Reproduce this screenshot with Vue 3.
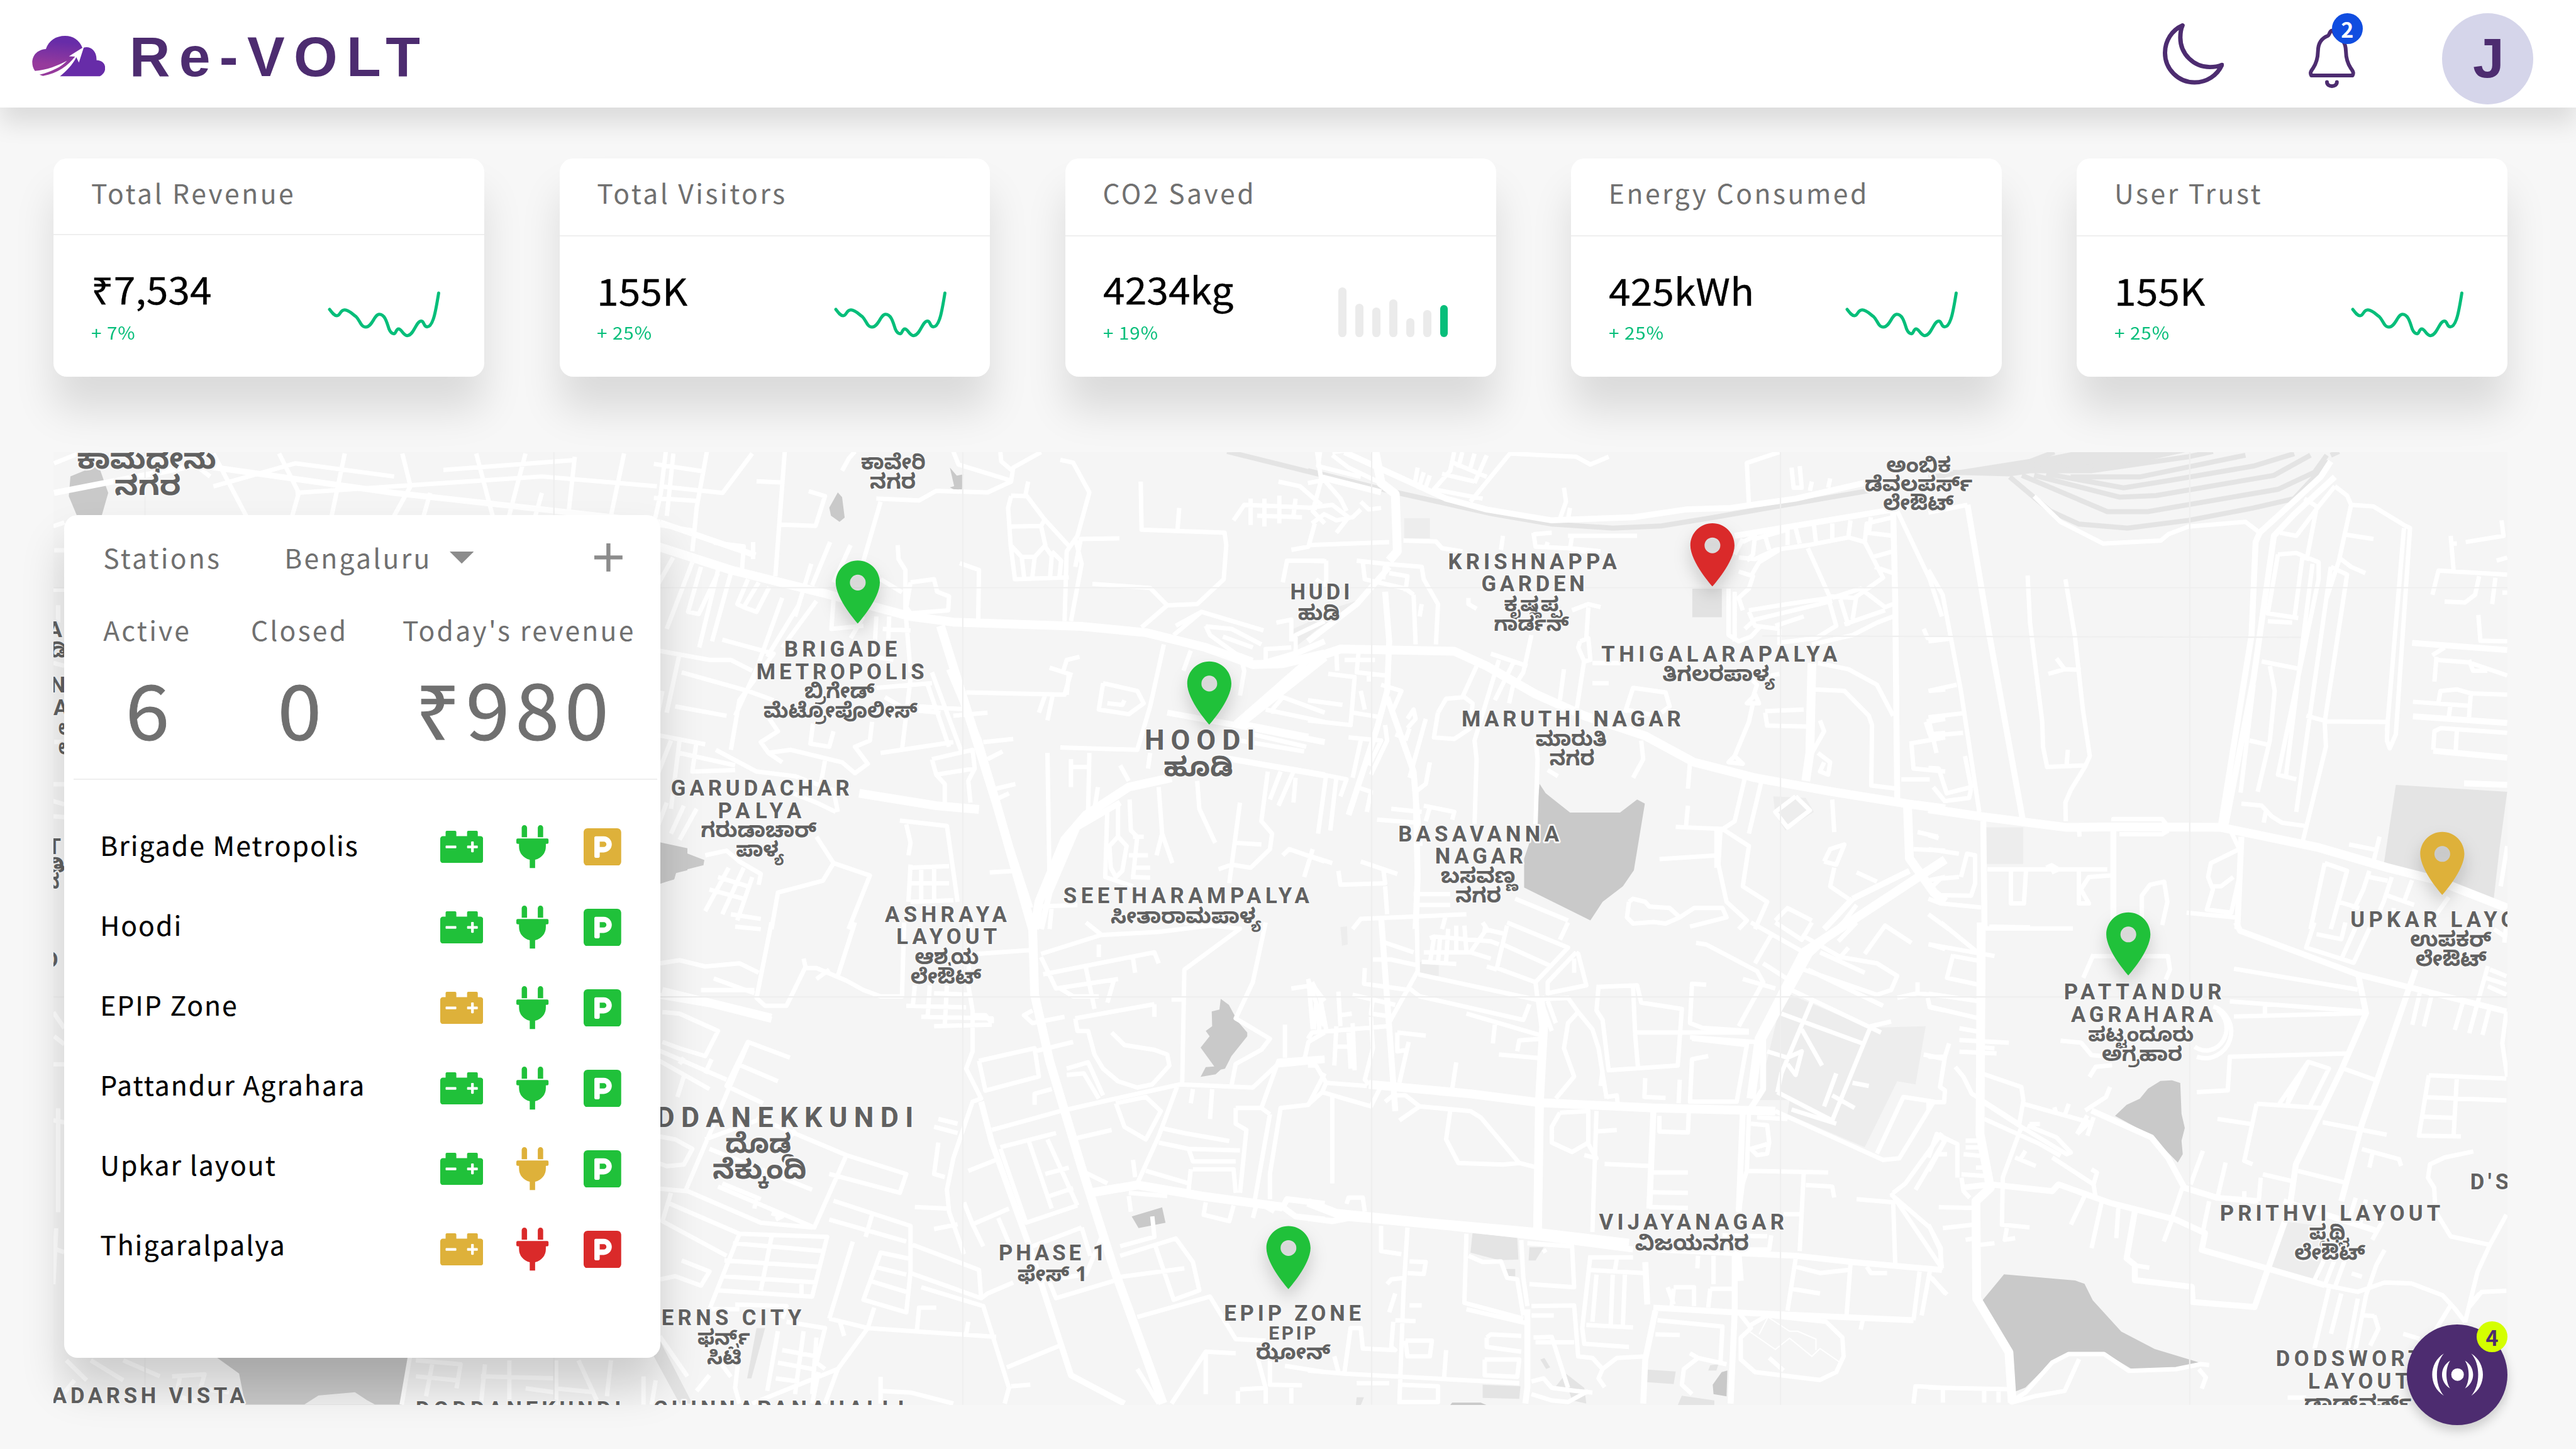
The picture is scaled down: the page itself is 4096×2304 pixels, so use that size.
<script setup>
const cards = [
  { title: 'Total Revenue', value: '₹7,534', delta: '+ 7%', kind: 'line', lead: true },
  { title: 'Total Visitors', value: '155K', delta: '+ 25%', kind: 'line', low: true },
  { title: 'CO2 Saved', value: '4234kg', delta: '+ 19%', kind: 'bars' },
  { title: 'Energy Consumed', value: '425kWh', delta: '+ 25%', kind: 'line', low: true },
  { title: 'User Trust', value: '155K', delta: '+ 25%', kind: 'line', low: true },
]
const bars = [37, 25, 22, 28, 14, 20, 24]

const stations = [
  { name: 'Brigade Metropolis', battery: 'ok', plug: 'ok', park: 'warn' },
  { name: 'Hoodi', battery: 'ok', plug: 'ok', park: 'ok' },
  { name: 'EPIP Zone', battery: 'warn', plug: 'ok', park: 'ok' },
  { name: 'Pattandur Agrahara', battery: 'ok', plug: 'ok', park: 'ok' },
  { name: 'Upkar layout', battery: 'ok', plug: 'warn', park: 'ok' },
  { name: 'Thigaralpalya', battery: 'warn', plug: 'down', park: 'down' },
]

const pins = [
  { x: 2558, y: 1859, s: 'ok' },
  { x: 3606, y: 2160, s: 'ok' },
  { x: 5106, y: 1748, s: 'down' },
  { x: 7282, y: 2668, s: 'warn' },
  { x: 6346, y: 2908, s: 'ok' },
  { x: 3842, y: 3843, s: 'ok' },
]

// [text, left, right, baseline, font size]
const labels = [
  ['BRIGADE', 2339, 2675, 1958, 65], ['METROPOLIS', 2256, 2756, 2025, 65],
  ['HOODI', 3413, 3742, 2235, 84], ['GARUDACHAR', 2001, 2533, 2372, 65], ['PALYA', 2141, 2390, 2439, 65],
  ['SEETHARAMPALYA', 3171, 3904, 2693, 65], ['ASHRAYA', 2639, 3002, 2749, 65], ['LAYOUT', 2673, 2973, 2814, 65],
  ['HUDI', 3847, 4025, 1787, 65], ['KRISHNAPPA', 4318, 4821, 1696, 65], ['GARDEN', 4417, 4725, 1762, 65],
  ['THIGALARAPALYA', 4775, 5478, 1972, 65], ['MARUTHI NAGAR', 4358, 5012, 2166, 65],
  ['BASAVANNA', 4169, 4649, 2508, 65], ['NAGAR', 4279, 4542, 2575, 65],
  ['UPKAR LAYOUT', 7008, 7608, 2763, 65], ['PATTANDUR', 6154, 6624, 2980, 65], ['AGRAHARA', 6175, 6599, 3046, 65],
  ["D'S", 7365, 7480, 3546, 65], ['PRITHVI LAYOUT', 6619, 7276, 3639, 65],
  ['DODSWORTH', 6786, 7278, 4072, 65], ['LAYOUT', 6882, 7182, 4140, 65],
  ['VIJAYANAGAR', 4768, 5320, 3666, 65], ['DODDANEKKUNDI', 1806, 2724, 3359, 84],
  ['PHASE 1', 2978, 3296, 3758, 65], ['EPIP ZONE', 3650, 4058, 3938, 65], ['EPIP', 3783, 3924, 3994, 56],
  ['FERNS CITY', 1925, 2390, 3950, 65], ['CHINNAPANAHALLI', 1949, 2696, 4222, 65],
  ['DODDANEKUNDI', 1240, 1852, 4224, 65], ['ADARSH VISTA', 156, 729, 4183, 65],
  ['A', 142, 184, 1899, 65], ['N', 150, 196, 2065, 65], ['A', 160, 202, 2131, 65],
  ['T', 142, 180, 2547, 65], ['D', 132, 177, 2883, 65],
]
const local = [
  ['ಬ್ರಿಗೇಡ್', 2399, 2608, 2082, 62], ['ಮೆಟ್ರೋಪೊಲೀಸ್', 2277, 2736, 2139, 62],
  ['ಹೂಡಿ', 3470, 3677, 2314, 80], ['ಗರುಡಾಚಾರ್', 2090, 2435, 2496, 62], ['ಪಾಳ್ಯ', 2195, 2338, 2554, 62],
  ['ಸೀತಾರಾಮಪಾಳ್ಯ', 3312, 3761, 2753, 62], ['ಆಶ್ರಯ', 2728, 2919, 2874, 62], ['ಲೇಔಟ್', 2715, 2926, 2932, 62],
  ['ಕಾವೇರಿ', 2567, 2760, 1399, 62], ['ನಗರ', 2594, 2731, 1456, 62], ['ಹುಡಿ', 3870, 3995, 1849, 62],
  ['ಕೃಷ್ಣಪ್ಪ', 4484, 4657, 1822, 60], ['ಗಾರ್ಡನ್', 4454, 4678, 1880, 60], ['ತಿಗಲರಪಾಳ್ಯ', 4957, 5293, 2030, 62],
  ['ಮಾರುತಿ', 4579, 4791, 2224, 62], ['ನಗರ', 4620, 4755, 2282, 62], ['ಬಸವಣ್ಣ', 4296, 4524, 2633, 62],
  ['ನಗರ', 4340, 4476, 2691, 62], ['ಅಂಬಿಕ', 5624, 5817, 1408, 62], ['ಡೆವಲಪರ್ಸ್', 5560, 5881, 1465, 62],
  ['ಲೇಔಟ್', 5615, 5825, 1521, 62], ['ಉಪಕರ್', 7186, 7428, 2822, 62], ['ಲೇಔಟ್', 7202, 7414, 2880, 62],
  ['ಪಟ್ಟಂದೂರು', 6226, 6541, 3105, 60], ['ಅಗ್ರಹಾರ', 6267, 6507, 3163, 60], ['ಪೃಥ್ವಿ', 6885, 7005, 3696, 62],
  ['ಲೇಔಟ್', 6841, 7052, 3756, 62], ['ಡಾಡ್ಸ್‌ವರ್ತ್', 6870, 7190, 4203, 62], ['ವಿಜಯನಗರ', 4875, 5215, 3727, 62],
  ['ದೊಡ್ಡ', 2163, 2365, 3437, 80], ['ನೆಕ್ಕುಂದಿ', 2125, 2405, 3514, 80], ['ಫೇಸ್ 1', 3034, 3242, 3819, 62],
  ['ಝೋನ್', 3745, 3967, 4052, 62], ['ಫರ್ನ್ಸ್', 2080, 2237, 4008, 62], ['ಸಿಟಿ', 2108, 2211, 4067, 62],
  ['ಕಾಮಧೇನು', 230, 645, 1396, 84], ['ನಗರ', 342, 540, 1476, 82],
  ['ಡಿ', 150, 200, 1959, 62], ['ಲೇ', 175, 230, 2190, 62], ['ಲೇ', 175, 230, 2248, 62], ['ತಿ', 145, 195, 2600, 62], ['ನ', 140, 178, 2650, 62],
]

// Map tiles: own coordinate space each, placed by transform
const tiles = [
  {
    t: 'translate(1950 1320) scale(1.27551 .92474)',
    water: 'M430 160l10 15 6 66-12 14-20-20-4-26zM692 80l16 26 16-4-4 52-14 0-14-10 10-4zM14 1290L118 1345 116 1362 52 1384 48 1406 14 1422z',
    park: 'M1494 600L1560 560 1568 580 1530 625 1494 665z',
    rail: 'M1340 28L1568 106',
    major: 'M0 330L180 410 400 486 600 560 700 578 1000 592 1150 612 1290 660 1400 715 1470 712 1568 680M480 1130L660 1170 760 1182M670 590L800 1160 885 1568M1568 690L1370 905M890 1568L900 1480 960 1280 1010 1200 1110 1110 1210 1080',
    mid: 'M1568 640L1500 680 1400 720M1360 905L1530 700M1200 870L1400 920 1568 965M690 730L760 960 830 1290 880 1500M905 1568L925 1450 990 1240 1090 1160M1330 1015L1568 1072',
    minor: 'M28 28L16 165 0 260M124 28L100 210 90 350M0 68L116 92M0 178L106 188M0 262L96 284M306 28L284 430M240 124L302 128M362 156L400 172 378 268 296 264M440 90L456 50 470 28M530 190L490 380M520 180L620 186 660 155 780 160 835 125 840 80 905 30M700 28L712 70 835 122M810 30L812 60 838 90M950 55L980 64 1018 160 990 300 965 350 960 575M835 170L872 172 912 245 975 340M875 125L868 172M835 172L828 210 834 330 844 440 970 434M836 270L905 268 915 245M905 268L915 330 890 368 860 368 834 330M860 370L866 440M890 370L884 440M915 335L930 365 926 435M930 350L952 380 948 432M985 400L998 310 1088 308M985 310L1000 390 975 575M1138 125L1140 280 1334 290 1338 330 1332 440 1270 520 1200 524 1140 595M1228 210L1224 280M1025 455L1160 468 1200 524M715 388L760 410 758 580M600 450L655 440 662 480 690 495 688 540 600 550 590 530 600 450M570 330L572 375 588 410 588 540 600 740M530 440L580 482M140 322L210 334 206 410M232 320L232 375M412 320L370 460M460 330L420 450M368 390L330 560M45 370L0 480M90 385L30 600M110 400L80 545 105 552 150 420M150 410L106 660M180 420L136 640M245 450L210 530 240 545 270 465M210 530L195 520 220 440M10 670L130 700 180 700 230 735M60 680L30 870M20 800L0 940M160 635L280 680 200 830 180 990M300 500L240 730 190 880M380 510L300 660M340 520L265 690M420 505L415 600 490 590M490 560L460 630M520 560L515 690 560 700M550 560L548 640M535 600L600 605M65 740L220 800 280 830M50 850L170 880M0 940L120 972M60 960L40 1180M0 1100L40 960M100 960L90 1060 190 1055M60 1000L190 1040M30 1160L0 1270M70 1170L40 1260M100 1180L60 1280M145 990L240 1060 330 1075 420 1120 430 1190M290 1110L380 1160 425 1190M300 1030L268 1000 250 965 290 930 270 890M265 1000L320 990 440 1030 470 1065 500 1035 470 980 505 960 510 900M400 1025L390 1100M372 905L366 970 410 980 420 930M520 790L650 775M540 820L590 860 670 870M600 760L580 990M650 740L720 1000M620 850L740 860M640 780L690 980M530 1000L700 965M700 880L780 870M730 805L960 812 975 740M965 812L970 745 925 725M955 745L965 700 995 690M900 870L915 812M920 895L932 815M1050 775L1130 800 1145 840 1110 875 1040 860 1050 775M1060 840L1095 845 1100 830M1192 650L1160 850 1130 990 950 982M1220 590L1280 545 1425 605M1280 545L1215 620M1290 590L1300 620 1360 680 1400 700M1290 592L1350 600 1420 650M1400 660L1330 625M1255 670L1238 735M1370 680L1380 735 1370 815M1430 710L1430 665 1490 660M1455 580L1490 570 1490 640M1500 690L1500 620 1568 575M1430 860L1568 900M1440 870L1470 820 1568 870M1380 905L1530 945M1400 940L1525 980M1370 960L1520 995M1550 28L1560 120 1540 220 1568 260M1460 125L1510 140 1560 200M1355 250L1380 200 1550 210M1395 180L1395 265M1427 180L1427 270M1462 170L1462 260M1500 180L1495 235M1410 235L1515 240M1490 345L1530 335 1545 260M1470 450L1480 380 1568 380M650 1020L745 990 750 1050 660 1070 650 1020M660 1070L680 1100 680 1160M750 1050L735 1090 740 1160M770 965L840 955M780 1020L815 995M800 1115L845 1100M800 1150L830 1130M785 1385L845 1380M575 1218L685 1235 710 1480M590 1230L600 1290 595 1330M600 1360L595 1480M625 1370L625 1480M655 1360L655 1480M595 1370L690 1365M600 1420L690 1420M600 1480L700 1475M920 1000L925 1430M975 1020L975 1110M1018 1000L1015 1190M975 1045L1018 1045M1038 1110L1030 1180M1060 1180L1055 1400 1120 1430M1085 1165L1085 1270 1065 1300 1068 1370 1080 1400 1095 1380 1105 1300 1085 1270M1112 1150L1115 1250 1130 1270 1120 1400M1120 1270L1145 1270M1110 1330L1155 1330M1120 1370L1160 1370M1115 1400L1160 1402M1180 1110L1188 1260 1175 1330M1188 1260L1212 1355M1270 1090L1275 1180 1312 1290M1370 1160L1345 1420M1360 1290L1420 1295M1320 1375L1350 1360 1395 1370 1440 1310 1445 1260 1420 1220 1435 1060M1465 1060L1440 1150M1495 1060L1460 1170M1090 1040L1110 1090M1160 1000L1155 1050M1500 1080L1495 1160M1470 1330L1485 1310 1568 1350M1540 1310L1520 1400M380 1270L420 1355 505 1395 455 1568M420 1355L395 1412 290 1450 275 1568M120 1330L170 1315 200 1350 250 1390 245 1425M175 1370L120 1510M210 1370L160 1520M230 1400L195 1540M150 1400L220 1430M130 1440L210 1470M180 1520L250 1535M190 1560L250 1568M900 1495L990 1490M930 1495L925 1568',
  },
  {
    t: 'translate(3900 1320) scale(1.21173 .92474)',
    water: 'M570 1100L585 1130 645 1192 768 1192 810 1150 829 1163 802 1378 775 1430 725 1480 695 1540 532 1434 532 1340 545 1290 560 1230z',
    park: 'M237 243H300V308H237zM0 560L140 500 60 570 0 620zM1145 1140L1225 1145 1245 1190 1175 1250 1150 1200z',
    rail: 'M0 90L200 155 450 228 600 262 750 275 870 268 1000 240 1568 112',
    major: 'M0 700L80 665 360 672 440 720 560 810 680 880 830 945 950 1030 1100 1080 1290 1125 1480 1165 1568 1180M165 28L180 130 215 165 220 350 200 380M1240 710L1235 1000 1225 1090M1475 1160L1480 1340 1540 1450 1568 1480',
    mid: 'M0 640L120 520 200 400M30 110L180 160M90 30L340 180 440 215 600 250 800 240 930 215 1040 210 1200 180 1400 120M1050 300L1440 215M190 480L200 640 195 800 170 920 100 1200M195 820L260 1060 275 1300M265 1120L270 1400 265 1568M1440 220L1445 500 1450 1150M1340 1470L1480 1380M1270 1568L1340 1470',
    minor: 'M30 30L25 75 130 110M60 40L100 80 180 130M0 130L40 120 60 150 80 180 95 220M10 260L40 230 70 250 110 240 130 215M0 210L60 200 100 240 70 290M130 190L150 215 180 210M60 30L120 20M0 330L200 320M235 315L315 318 330 340 380 350M45 380L45 450 10 500M0 380L45 382M20 440L60 480M360 30L350 90 310 150 430 180M270 80L262 140M285 95L272 150M300 105L288 150M330 100L410 125M350 60L440 110M380 30L370 80M410 35L400 80M500 30L450 110 400 190M440 40L410 130M500 35L660 45 695 70 740 45M630 145L635 190 620 245M645 210L640 245M1085 200L1080 65 1160 30M1190 80L1195 145 1215 145 1210 75M1240 125L1235 155M1285 115L1280 145M555 290L560 335 640 340 700 355M555 295L600 290M640 300L810 300M650 300L645 340 720 350M480 300L475 345M590 320L585 340M1050 360L1070 310M1070 320L1100 300 1095 360 1080 380M1100 310L1180 280 1180 330M1125 300L1135 345M1200 275L1210 325M1245 265L1250 320M1290 260L1290 310M1335 250L1330 300M1385 240L1380 295M1060 370L1100 375 1150 345 1230 330 1330 305 1370 320M1370 320L1375 260 1440 240M1375 290L1440 300M1385 370L1440 350M1370 320L1415 435 1345 500 1285 495M1395 400L1440 420M1230 340L1285 500 1180 520 1085 540M1280 500L1300 590 1250 630 1155 645M1310 505L1330 590M1090 430L1110 385 1160 345M1060 415L1095 430 1085 470 1060 500 1070 540M1035 470L1035 620 1060 640 1090 625 1115 590M1085 545L1100 590 1160 600M1075 600L1100 570 1290 510M1150 590L1220 560M1290 500L1360 470 1420 530 1440 520M1350 490L1340 570M1320 585L1420 540M1240 650L1340 620 1400 580 1440 560M1160 650L1160 600M1050 480L1050 640M1450 220L1530 440 1560 560M1515 600L1525 630 1568 630M120 380L190 390 280 400 285 440 320 520 315 650M135 385L140 440 240 470 260 490M190 395L185 440M240 480L245 430 200 420M260 490L265 650M280 520L275 560M70 670L72 735M125 670L120 740 190 750M90 700L165 700M150 740L150 770M50 745L115 755 105 910 0 895M0 830L85 845M110 870L180 885M130 800L140 860M180 780L230 800 210 860M245 890L260 860 265 890 245 920M250 920L240 960M100 950L180 960 150 1040M130 960L110 1080M190 910L195 960 155 1070M215 940L245 955M0 1060L95 1085 80 1140M45 1070L25 1260M70 1080L55 1250M120 1110L155 1125 145 1190M290 890L250 1080M300 1030L290 1100 265 1125M320 870L310 950 360 955 400 920 405 840 385 820 340 825 320 870M415 720L380 820M470 700L410 960 415 1020 410 1230M505 710L460 830M550 620L530 740 510 780M505 780L495 840M450 680L540 720M395 500L395 520 415 535M650 540L690 520 720 530M690 530L685 630M670 640L690 630 695 700 680 705 665 660 670 640M680 700L660 870M700 710L770 710M700 775L740 775M630 730L620 830M780 870L800 790 880 805 890 850 870 870M780 860L860 880M820 960L825 1020 800 1080M940 1030L935 1115M935 1170L930 1240 905 1238M930 1240L1020 1245 1085 1300 1070 1430 1130 1480 1100 1568M1075 1080L1050 1220 1015 1250 1010 1360 1030 1480 1080 1540 1060 1568M1115 1095L1085 1260M1005 1240L1005 1370M865 1342L1010 1330M1075 740L1105 780 1095 820 1080 840 1110 840 1100 810M1095 840L1085 900 1050 1010M1050 1010L1070 1035 1035 1030 1050 1010M1125 870L1130 912 1230 915M1125 865L1220 860M1105 760L1160 745M1255 710L1330 730 1400 780 1440 880M1245 795L1320 800 1380 880 1388 910 1386 1105 1450 1115M1260 895L1270 930 1240 1000M1255 1000L1285 1030 1280 1070 1260 1060 1270 1030M1290 1150L1295 1255M1200 1140L1235 1185 1180 1240 1150 1190 1200 1140M1480 970L1568 950M1485 970L1490 1050 1568 1060M1520 900L1530 940 1568 935M1525 900L1568 890M1530 800L1568 795M1460 1085L1530 1085M1500 1255L1550 1270M1490 1310L1568 1315M1530 1410L1568 1400M1350 1385L1400 1415M1270 1350L1285 1310 1320 1295 1300 1360 1270 1350M1295 1370L1285 1430 1330 1470M1305 1568L1350 1490M1150 1540L1180 1500 1240 1540M790 1480L800 1470 830 1480 840 1495 890 1500 915 1530 880 1550 850 1545 800 1550 785 1530 790 1480M915 1530L950 1500 1020 1500 1030 1530 940 1560M0 1330L60 1355M130 1350L220 1390M185 1370L190 1420 80 1425 75 1380M190 1430L195 1520M170 1215L270 1225M205 1180L280 1190M285 1170L360 1190 355 1215M300 1175L290 1220M110 1568L130 1535 390 1520M260 1455L350 1455M260 1490L350 1490M510 1470L640 1540M340 1520L330 1568M590 1055L615 1075M560 950L565 1020 560 1230',
  },
  {
    t: 'translate(5750 1320) scale(1.21173 .92474)',
    park: 'M140 1240H233V1358H140z',
    park2: 'M1150 1103L1424 1125 1405 1310 1390 1480 1120 1362z',
    rail: 'M0 112L130 85 250 60 310 30M60 95L200 100 400 60 540 28M200 110L300 220 370 262 490 275 640 250 800 210 900 180 985 60M230 105L440 222 540 222 860 150 950 95 980 40M260 105L470 175 560 170 850 105 940 40M290 100L480 145 600 120 800 75 900 35M350 110L520 110 780 40M120 90L400 90 640 45 700 28M990 40L1010 28',
    railw: 'M120 90L360 28 640 28 480 75 330 95z',
    major: 'M0 1180L130 1205 340 1240 460 1238 720 1240 960 1305 1130 1370 1250 1410 1424 1500',
    mid: 'M96 200L150 620 232 1215M1000 110L900 230 850 300 800 760 730 1240M990 60L965 110 815 290 805 320 795 620 720 1230M455 1230L455 1568M135 1220L138 1568M770 1270L760 1568',
    minor: 'M0 225L96 200M260 172L325 255 430 325 572 315 590 295 640 270 780 255 815 290M0 410L35 490 80 800 125 1190M244 428L250 580 280 900 282 980 292 1045 385 1040M337 440L360 620 380 860 397 1010 385 1045 350 1120 337 1160 338 1220M315 695L335 730 295 745M335 730L375 732M343 990L340 1040M0 800L70 780M0 885L85 872M0 640L50 632M0 945L85 935M0 890L20 1000M90 1010L105 1110 45 1130 25 1050 0 1048M105 1115L100 1145 40 1155 12 1110M455 1220L455 1213 575 1213 590 1238M470 1262L575 1262 590 1250M370 1240L372 1270M865 290L905 300 960 205 1000 140M925 180L955 205M955 210L930 380M1000 140L1030 170 1040 200 1010 380 980 500M1040 200L1095 205 1170 265 1185 275 1150 940 1135 985 1128 960 1130 900 980 898 930 880M1170 275L1128 930M1020 295L1095 310M1010 370L1040 400 1075 420M990 400L1030 425 975 900 978 980 920 1290M860 360L905 355 960 385 960 440 860 1070 905 1085M860 360L835 550 910 565M920 370L900 570M835 575L895 580M945 390L880 1070M990 400L905 1190M820 705L910 728M840 720L852 800 840 960 810 1125M790 960L840 975M800 780L768 1128M770 1163L820 1170 845 1205 870 1225 925 1235M825 1225L830 1190M745 1255L765 1310 695 1355 688 1400 700 1440 685 1505 745 1515 765 1400M700 1430L720 1430 750 1400M635 1515L755 1530M525 1550L525 1460 545 1425 580 1415 588 1480 575 1555M975 1355L1030 1380 990 1568M975 1355L940 1568M1035 1295L1100 1312M1110 1270L1095 1350M1085 1380L1070 1440 1045 1510M1085 1400L1130 1412M1140 1400L1120 1480 1090 1568M1190 1410L1170 1480M1130 1460L1195 1490M1280 1465L1250 1520M1145 1500L1140 1568M1010 1480L1060 1500M1410 250L1415 300 1322 320M1285 300L1292 410M1300 325L1285 325M1424 425L1255 412 1240 490M1355 430L1345 490 1320 515 1270 512M1395 435L1387 520M1424 370L1398 380M1412 483L1424 483M1353 555L1358 638 1424 640M1250 700L1330 708 1424 750M1330 700L1340 735 1375 735M1270 660L1240 685M1250 690L1245 770M1424 812L1335 808 1300 795 1260 800 1255 835M1335 800L1330 885M1285 840L1280 885M1192 835L1330 848M1424 935L1260 920 1245 930 1242 990M1300 930L1297 1000M1424 1300L1408 1430M0 1310L75 1325M0 1265L25 1275M80 1400L95 1325 115 1330 115 1420 105 1460 20 1458 10 1430 30 1405 75 1400M0 1470L30 1485 130 1498M0 1520L50 1568M145 1375L440 1375M290 1370L303 1362 320 1375 303 1385M203 1380L203 1485 235 1485 240 1380M370 1380L370 1485 395 1485 375 1440 395 1400 450 1395M150 1560L250 1562',
    mid2: 'M1190 645L1424 668M1192 882L1424 903M1242 993L1424 1015M1318 1098L1424 1103',
  },
  {
    t: 'translate(1950 2750) scale(1.27551 .9375)',
    water: 'M1325 243L1344 262 1365 315 1387 350 1387 362 1350 425 1335 465 1325 468 1313 483 1278 491 1290 460 1310 458 1278 398 1299 362 1290 345 1305 330 1304 283 1322 277zM1117 935L1188 906 1196 955 1133 972z',
    park2: 'M14 1330L90 1530 60 1530 0 1380zM240 1290L260 1290 228 1450 218 1450z',
    major: 'M885 0L890 230 925 440 1000 780 1075 1100 1190 1530M1020 860L1130 835 1280 870 1470 905',
    mid: 'M0 230L130 260 275 310M20 215L275 300M765 570L790 700 875 1020 975 1440 1100 1530M1470 905L1480 880 1568 895M1470 905L1500 935 1568 945',
    minor: 'M14 130L60 120 120 140 200 130 245 160M110 215L235 215M140 178L235 225M275 0L240 240 260 265 310 265 355 140M350 115L355 145 380 145 450 185 490 215 530 235 580 235 585 0M470 0L430 170M380 180L410 150M20 285L60 290 150 345 120 425 60 400 20 380M0 400L170 500M0 430L130 530M70 430L60 450M135 435L120 480M70 490L55 555M255 575L170 520 220 380 318 430M195 450L290 505M220 385L75 850M10 680L50 690 90 720 70 770 30 775 0 760M120 690L260 620M240 620L450 740 590 800 575 860 410 800M450 740L375 970 150 840M330 660L300 720M130 720L370 850M160 830L250 880M240 870L235 910M0 845L80 855 250 955 370 970M40 860L20 950 170 1060M30 890L200 990 405 1000 370 1190 150 1170M200 990L130 1230M185 1020L395 1045M165 1075L385 1095M160 1125L380 1145M275 1000L250 1170M345 1150L345 1185M130 1230L200 1230M190 1215L310 1220 300 1260M15 1135L50 1125 110 1155 130 1110 65 1075M275 925L300 935 285 945M420 885L600 965 600 1110 590 1240 490 1200 530 1050 600 1070M410 945L590 1015M510 930L495 1000M515 1095L590 1120M505 1140L590 1175M605 1025L760 1105 765 1195 600 1115M625 1160L770 1220 830 1480 820 1530M765 1195L780 1180 840 1145M515 1225L500 1290 430 1420 230 1530M410 1260L500 1290 800 1318M435 1270L445 1315M615 1295L620 1225 660 1225M735 1270L730 1310M465 1015L410 1260M310 1270L400 1290 380 1400 400 1420M290 1300L265 1490M350 1300L330 1500M380 1320L370 1500M300 1360L380 1380M290 1400L370 1420M285 1450L340 1460M200 1360L190 1480 200 1530M130 1440L100 1490M150 1390L180 1445M385 1430L370 1530M430 1420L400 1530M530 1445L530 1530M530 1490L600 1495 700 1530M825 1415L950 1345M835 1475L880 1470M655 225L740 230M590 265L730 270M625 300L790 305 790 320M655 330L790 325M610 200L605 270M645 200L640 300M685 200L680 330M735 200L745 280 745 410 730 465 765 560 745 570 700 750 685 850 690 920 725 1055M740 295L775 295 790 320M740 0L735 200M755 100L880 88M905 100L1045 40 1180 30 1300 10M1045 38L1010 0M905 110L940 210 1085 180M910 165L1170 95 1180 130M1120 115L1125 160M1040 70L1040 110M1010 145L1030 275M950 210L980 235 1040 235M1075 185L1060 255M885 280L865 295 885 320 960 300M985 305L1170 260M985 305L990 345 1015 345 1030 420 1050 465 1085 505 1130 525 1165 515 1205 455 1200 420 1170 405 1100 390 1070 350M1170 260L1170 300M1240 0L1370 20 1240 150 1235 510M1430 0L1400 190 1360 305 1440 370 1420 405 1360 450 1350 520M1210 245L1240 245M760 440L890 400 900 490 775 535 760 440M890 410L980 380M965 465L1015 445 1050 550M965 485L1005 480 1040 560M890 580L890 545 930 530M950 600L1080 560 1230 515 1400 525 1455 455 1568 440M1225 515L1180 680 1130 830M1260 530L1255 575M1305 530L1300 625M1080 575L1150 555 1185 600 1150 690 1100 650 1080 575M790 660L950 600M810 715L940 670M810 720L870 955 990 900M875 690L930 910M920 690L990 900M735 790L800 755M975 690L1070 660M915 800L970 780M925 870L980 845M1000 790L1060 830M1120 755L1125 810M1190 655L1240 670 1345 695M1180 700L1250 720 1370 725M1250 720L1260 760 1360 760M1260 785L1355 785 1360 860M1255 785L1250 850M1360 590L1420 590 1440 610M1360 590L1360 640 1385 660 1370 860M1440 610L1405 880M1420 590L1460 440 1568 430M1520 440L1530 380 1568 350M1568 480L1530 580 1465 590 1440 800 1440 880M1150 790L1250 830M1110 860L1200 870M1110 870L1115 920M1165 935L1170 1000 1090 1030M1090 1060L1220 1005 1260 1080 1275 1170 1215 1200 1170 1020M1075 1130L1240 1100M1130 1255L1300 1190 1360 1325 1430 1330M885 1030L1000 970M1000 970L1020 1060M895 1140L1010 1120 1050 990M925 1145L940 1195 1075 1140M610 905L690 910M655 975L710 960M725 890L745 960 830 910M745 960L770 1030M805 940L830 1020M655 650L710 670M665 625L710 640M665 700L655 800 680 810M1290 890L1285 930 1345 950 1355 900M1400 940L1410 890 1450 920M1210 1530L1290 1365 1360 1370M1290 1370L1290 1500M1130 1420L1180 1530M1370 1485L1430 1480 1430 1530M1365 1490L1365 1530M1410 1380L1430 1480M1440 1380L1440 1470 1515 1472M1490 1480L1490 1530M1475 1410L1568 1430M1490 210L1540 200 1568 250M1530 180L1540 340M1555 280L1555 350M1475 325L1475 430',
  },
  {
    t: 'translate(3900 2750) scale(1.21173 .9375)',
    water: 'M1018 1430L1032 1425 1030 1507 998 1500 996 1470zM355 1527H425L440 1535H350z',
    park: 'M80 15L96 12 98 70 84 74zM276 125H322V170H276zM1170 220L1380 335 1520 330 1495 515 1450 505 1370 715 1180 610 1185 565 1105 565 1135 410z',
    park2: 'M405 988L515 1002 518 1072 470 1074 400 1050zM545 1033L580 1033 560 1075 543 1075zM488 1102H510V1125H488zM835 1422L905 1428 900 1468 835 1462zM430 1470L523 1475 520 1515 430 1512zM572 1390L582 1385 596 1415 586 1420zM610 1475L635 1435 680 1480 685 1530 650 1520 640 1480zM920 1505L1000 1520V1535H910zM120 1510L138 1510 130 1535 118 1535zM990 1408L1010 1405 1005 1425 985 1425z',
    major: 'M150 515L400 545 570 573 850 590 1150 600M570 235L580 330 570 560 565 980M0 890L70 925 300 955 560 985 790 1020M1568 -200L1220 95 1110 370 1090 560',
    mid: 'M0 940L60 950 100 940 350 970 560 1000 800 1040M860 1040L1200 1060 1340 1080 1560 1105M1070 600L1060 920M850 600L840 910M1050 1060L1050 1240 1040 1530M1060 1060L1065 1140M1320 0L1235 100 1120 370 1120 530 1090 590M215 600L180 -20M830 1080L835 1215M855 1235L830 1390 825 1530M540 1230L540 1480 535 1530M850 1225L1050 1240 1490 1265',
    minor: 'M268 0L270 155 195 330 10 350 0 370M272 165L560 245 640 240 665 285 640 320 630 400 655 490 610 560M250 210L275 235 530 310 545 260M390 290L575 360M460 325L455 385M575 370L520 375 515 410M470 420L575 432M185 62L260 95M160 118L205 118 265 135M300 50L310 45 450 60 470 70M285 95L400 95 450 115M300 130L310 50M320 130L325 50M340 125L345 20M365 90L365 10M390 90L385 10M280 125L365 132M400 95L440 20 430 0M430 20L480 35M490 10L465 145 560 190M465 150L440 140M490 0L640 80 560 190 565 245M480 70L600 140M620 55L640 0M660 95L590 190 590 225 685 200 665 100 660 95M655 115L655 160M590 250L610 320M575 255L600 345M665 285L700 340 715 400 735 560M710 205L810 200 820 255 920 275 910 455 740 470 725 310 710 280 715 205M800 205L805 350 1085 350M805 355L812 460M980 198L945 195 940 320 970 335 1085 345M940 365L1100 380M945 370L1080 390 1055 570 940 570 945 435 985 425M720 520L725 470M735 555L760 550 762 575M830 495L828 555 880 558M915 500L912 575M140 145L138 195 250 215M110 230L215 262M160 240L155 290 210 300M155 300L160 400 140 500 150 515M0 180L40 330M10 190L30 240 45 340M75 220L80 330M80 295L108 290M70 330L65 455M110 320L115 470M100 350L105 465M70 395L115 395M20 260L15 340M220 350L290 360M220 350L220 410 245 405M248 380L225 510M365 445L355 530M0 455L20 455 45 510 145 520M45 510L35 540 0 580M35 540L155 585 180 520M60 550L60 830M190 570L210 550 240 550 275 585 400 600 425 620 520 765 565 780M275 585L225 630M350 600L340 690 370 765 480 770 520 765M180 965L180 1045 230 1055M245 970L235 1180 225 1530M95 895L100 875 135 875 140 920M250 1078L290 1080 285 1118 245 1115M195 1150L205 1135 240 1130M200 1240L215 1180M250 1218L280 1218M215 1265L265 1268M210 1270L205 1350 215 1360 135 1355 130 1290 105 1290 90 1430M240 1330L305 1330 300 1380 245 1380 240 1330M340 1360L335 1450M0 1425L90 1435 520 1465M120 1465L200 1465M225 1470L320 1475 320 1525 220 1525M65 1380L75 1430M390 990L385 1210 530 1260M390 1230L540 1275M395 1060L430 1080 475 1078 490 1130 515 1135 530 1250M525 1010L530 1130 540 1220M540 1020L650 1030 655 1160 545 1150M585 1050L580 1040M550 1220L655 1218 665 1380 700 1385 725 1420 760 1385 830 1380M440 1320L450 1310 525 1315M440 1320L440 1350 525 1365M435 1390L520 1390 515 1445 435 1440 435 1390M550 1250L605 1250M555 1320L600 1318 640 1480M560 1335L655 1335M725 1420L715 1450 730 1478M550 1460L580 1450 600 1480 660 1490 700 1495M550 1500L600 1520 640 1525 690 1490M690 1065L800 1065M695 1060L675 1290 680 1340 790 1350M690 1105L825 1115M760 1070L755 1110M710 1120L700 1270M750 1120L745 1280M780 1120L775 1280M685 1280L800 1288M620 605L690 600 690 700 650 730 600 700 600 650 620 605M690 705L710 750 680 740M710 600L700 985M705 665L760 660M730 768L850 775M850 795L935 795M845 858L935 860M840 905L935 908M865 615L865 665 935 668 937 605M1085 610L1080 790 1280 795M1090 640L1130 645 1135 700 1130 735 1105 740 1090 720 1130 705M1105 620L1180 625M1080 790L1070 830 1060 930M1220 795L1210 1045M1225 835L1290 840 1295 875M1350 880L1440 890 1445 1085M1435 860L1560 1100M1435 865L1530 970 1555 1040 1560 1100M1440 860L1470 830 1560 670M1495 850L1568 690M1150 600L1415 755 1455 750 1540 570 1465 555 1400 735M1190 595L1300 640M1155 540L1290 630 1385 330 1435 315M1155 540L1165 480 1240 250M1165 290L1365 385M1190 215L1410 350M1215 340L1265 455M1180 430L1215 410 1200 485 1180 450M1130 410L1180 430M1300 480L1270 585M1290 550L1345 590M1340 510L1380 520M955 65L980 70 1105 155 1120 190 1060 330M1070 180L1150 210M1120 130L1180 180M1140 40L1100 130M1090 0L1220 95M1150 0L1215 55 1240 0M1220 150L1400 230 1435 215 1450 170 1400 130 1310 110 1215 40M1260 95L1370 160M1230 150L1415 265M1310 110L1330 80M1370 100L1420 10 1485 65M1305 60L1350 0M1450 240L1500 225 1568 235M1500 190L1500 225M1530 70L1568 85M1525 240L1530 270 1568 280M1515 420L1568 435M1140 995L1135 1040 1060 1040M1020 995L1130 998M1170 928L1210 928M960 1060L958 1100M998 1060L998 1150M1200 1070L1180 1235M1200 1095L1260 1115 1330 1105M1335 1085L1325 1255M1375 1095L1385 1115 1425 1115M1505 1110L1490 1265M1530 1110L1510 1250M1535 1130L1568 1180M1190 1165L1260 1180M1365 1265L1360 1295M900 1160L950 1160 950 1220M900 1165L895 1220M885 1160L900 1215M990 1165L1045 1165M990 1165L985 1225M860 1265L1020 1285 1015 1400M855 1310L915 1312M1060 1240L1090 1290 1065 1320 1065 1390 1100 1430 1260 1455 1300 1430 1318 1380 1315 1320 1275 1270 1130 1250 1090 1280M1135 1385L1170 1425M940 1370L960 1385 1030 1405M960 1385L925 1420 920 1470 945 1500M1490 1530L1495 1475 1568 1480',
    thin: 'M1080 1295L1150 1358 1185 1322 1240 1380 1260 1355 1308 1398M1110 1310L1132 1255 1185 1300 1205 1300 1250 1325 1250 1360',
  },
  {
    t: 'translate(5750 2750) scale(1.23087 1.00128)',
    water: 'M452 576L480 543 512 525 532 495 562 472 590 470 610 478 613 570 621 612 613 650 616 690 604 715 540 635zM183 1048L355 1066 378 1076 398 1125 467 1218 548 1270 655 1310 610 1328 490 1328 425 1280 340 1280 300 1305 235 1385 204 1400 195 1280 127 1131z',
    park: 'M860 890L960 905 945 1064 828 1030z',
    major: 'M128 0L125 630 150 790 115 830 117 1120 195 1280 203 1430',
    mid: 'M745 0L755 25 1040 155 1400 265M1180 140L1050 600 1000 830M1040 150L1060 270 1000 440 890 720 875 850 820 1040 790 1145 640 1130 638 1085 500 1065 500 1020 480 1000 500 860M395 560L540 640 580 700 620 790 700 820 800 830M80 790L150 780 300 800 315 780 440 835 600 885 670 925 662 975 820 1030 960 1080M860 830L1090 920',
    minor: 'M130 18L350 18M0 65L160 100M30 0L125 95M60 95L45 165 120 185M60 100L125 115M0 212L125 235M0 250L120 285M75 315L120 325M75 350L195 358M75 385L165 390M130 372L160 375M50 360L40 400 0 400M40 400L28 490 40 500 38 535 0 535 0 560M65 430L85 460 105 510 220 600 230 530 225 490 130 450M120 530L145 545 220 605 335 690 345 685 310 640 240 605M135 585L270 660 320 695M225 610L180 760 178 900 245 908M230 540L390 595 360 630M245 600L270 600M305 550L310 570M340 540L330 575M380 560L430 520 440 490M385 575L360 630M400 580L385 635M390 460L405 430 445 425M320 352L370 358 395 395 440 400M300 700L350 740 400 780 408 745 395 735M400 780L405 820M380 810L345 900M420 830L395 970M460 850L455 940M590 885L570 950M615 790L590 880M635 780L665 680M700 820L720 715M765 800L765 830M680 830L665 920M25 848L110 850M35 910L110 900M90 945L115 940M125 960L160 955M190 910L185 945 210 940M0 900L30 970 30 1030 0 1035M0 1050L45 1108M0 740L40 650 20 630 0 700M20 630L70 660 70 760M20 690L45 690M90 650L125 650M90 670L125 670M85 690L125 695M115 730L135 730M80 750L140 755M80 760L85 800 100 820M210 700L260 725M235 680L220 710M400 95L375 165M400 100L580 100 585 140 575 170M690 250A60 75 0 0 1 650 400M700 260A45 60 0 0 1 645 370M730 235L1055 265M740 138L1040 200M740 280L1055 270M815 245L815 275M650 505L725 500 730 400 1020 390M795 540L955 553M795 540L765 710 785 720M955 595L1110 632M700 585L780 600M850 540L920 415 970 435 925 545M870 540L880 490M920 415L870 540M1005 435L1085 470M805 760L800 830M810 750L880 770M895 740L1010 775M1050 675L1140 705 1145 725M1075 690L1068 730M1212 455L1400 465M1212 455L1188 635 1290 637M1200 520L1400 530M1280 460L1272 637M1195 578L1272 582M1320 682L1250 700 1215 720 1210 760 1225 790 1228 860 1265 935 1360 960 1400 870M1360 960L1330 1040 1300 1190M1335 1105L1310 1140M1400 1097L1340 1100 1310 1145M1400 265L1390 360 1402 460M1190 210L1172 305M1220 210L1200 310M1295 235L1275 320M1330 240L1310 330M1360 250L1342 335M1400 0L1395 60M1355 130L1330 240M1360 140L1400 160M1350 165L1400 185M1355 190L1400 215M1040 0L1000 110M1075 0L1030 120 915 75 935 0M940 35L1000 50 1010 0M1370 20L1400 45M960 1080L1040 1100 1105 1072 1170 1075 1245 1110 1275 1150 1300 1190M970 1090L935 1270M1000 1105L975 1225M1040 1120L1015 1280M1060 1110L1030 1300M1265 1140L1220 1230M1105 975L1085 1020 1060 1110M1035 820L1020 880M1060 825L1045 900M1100 890L1075 945M960 1000L935 1065M985 1000L960 1080M1010 1000L985 1085M1025 1045L1050 1055M1150 1225L1190 1240M1080 1170L1090 1210 1070 1260M1050 1170L1080 1172M0 1385L200 1390M35 1390L35 1430M135 1390L135 1430M170 1390L170 1430M195 1430L235 1400 300 1310 340 1285 425 1285 485 1335 600 1330 660 1315 680 1318M655 1330L672 1355 662 1388M365 1300L330 1395 260 1410 200 1430M870 1415L915 1415M495 1020L535 1028',
  },
  {
    t: 'translate(150 2350) scale(1.21173 1.1926)',
    water: 'M410 1423L465 1463 480 1541 865 1541 885 1423zM1500 135L1568 150V205L1540 212 1535 228 1500 238z',
    hill: 'M625 1541L660 1518 750 1510 780 1530 800 1541z',
    minor: 'M0 30L35 40M8 70L35 72M8 560L35 600M10 620L35 640M8 690L35 690M20 800V1060M8 830L35 835M8 1150L35 1160M15 1100L8 1240M40 1430L90 1480M100 1430L180 1480M180 1430L270 1470M60 1480L20 1530M300 1470L380 1465 370 1500 440 1510M320 1470L310 1520 380 1535M900 1430L1010 1440 1000 1500M940 1440L925 1520M900 1470L1000 1480M1070 1440L1060 1541M1130 1430L1130 1541M1060 1470L1240 1475M1245 1430V1541M1300 1430L1350 1541M1380 1430L1370 1520M1460 1470V1541M1490 1480L1480 1541M1500 1370L1568 1470M1240 1500L1340 1510M1170 1500L1240 1510M885 1423L865 1541',
  },
  {
    t: 'translate(150 1500) scale(1.21173 .57398)',
    minor: 'M8 120L35 100M10 245H35M8 450H35M20 530V620M8 830L35 845M10 1240H35M8 1460H35',
  },
  {
    t: 'translate(0 0) scale(4.898)',
    water: 'M43 290L60 283 66 300 62 314 47 314 42 302z',
    mid: 'M33 300L120 283 240 300 402 318M402 318L460 338',
    minor: 'M130 276L150 314M170 276L182 300 178 314M210 276L202 314M245 276L250 296 240 314M290 276L300 314M320 276L310 314M350 278L346 314M380 276L372 314M130 296L180 282 240 290M180 300L330 290 400 296M270 286L350 280M402 296L440 300 458 276M410 276L406 314M33 282L48 276M110 276L128 290M262 300L258 314M330 300L326 314',
  },
]
</script>

<template>
  <div class="page">
    <header class="topbar">
      <div class="brand">
        <svg class="cloud" viewBox="100 323 228 361" preserveAspectRatio="none">
          <defs>
            <linearGradient id="cloudFill" gradientUnits="userSpaceOnUse" x1="205" y1="380" x2="150" y2="580">
              <stop offset="0" stop-color="#672ca8" />
              <stop offset="1" stop-color="#963a9c" />
            </linearGradient>
          </defs>
          <path fill="url(#cloudFill)" d="M143 441C152 365 174 323 203 323C228 323 248 362 257 430L215 506L234 508C212 590 180 655 134 682L123 670C160 645 192 600 209 545C180 590 145 630 109 636C92 570 100 450 143 441Z" />
          <path fill="#672ca8" d="M261 428C280 412 302 450 301 541C322 543 328 580 328 613C328 642 321 672 311 684H187C206 642 226 582 238 514L246 562Z" />
        </svg>
        <span class="brand-name">Re-VOLT</span>
      </div>
      <div class="actions">
        <svg class="moon" viewBox="32 32 448 448">
          <path d="M160 136c0-30.62 4.51-61.61 16-88C99.57 81.27 48 159.32 48 248c0 119.29 96.71 216 216 216 88.68 0 166.73-51.57 200-128-26.39 11.49-57.38 16-88 16-119.29 0-216-96.71-216-216z" />
        </svg>
        <div class="bell-wrap">
          <svg class="bell" viewBox="1721 21 34.6 45">
            <path d="M1723 56.2C1721.8 54.2 1722.6 53 1724.2 50.8C1726.8 47 1727.8 42.5 1727.9 38C1728 32.5 1730.2 28.5 1735.2 26.6C1736.6 26 1736.6 22.8 1738.3 22.8C1740 22.8 1740 26 1741.4 26.6C1746.4 28.5 1748.6 32.5 1748.7 38C1748.8 42.5 1749.8 47 1752.4 50.8C1754 53 1754.8 54.2 1753.6 56.2Z" />
            <path d="M1734.6 61.1C1734.6 65.1 1742 65.1 1742 61.1" />
          </svg>
          <span class="count">2</span>
        </div>
        <div class="avatar">J</div>
      </div>
    </header>

    <section class="cards">
      <article v-for="c in cards" :key="c.title" class="card" :class="{ lead: c.lead, low: c.low }">
        <h2>{{ c.title }}</h2>
        <div class="body">
          <div class="figures">
            <div class="value">{{ c.value }}</div>
            <div class="delta">{{ c.delta }}</div>
          </div>
          <svg v-if="c.kind === 'line'" class="spark" viewBox="919 882 348 260" preserveAspectRatio="none">
            <path d="M923 981C932 1003 938 1018 946 1018C956 1018 956 984 970 984C984 984 996 1012 1006 1024C1018 1046 1020 1084 1036 1084C1056 1084 1062 1010 1078 1010C1096 1010 1102 1060 1108 1094C1112 1112 1118 1123 1124 1123C1130 1123 1130 1095 1138 1095C1148 1095 1152 1134 1165 1134C1186 1134 1192 1049 1209 1049C1218 1049 1216 1083 1227 1083C1246 1083 1254 990 1263 886" />
          </svg>
          <div v-else class="bars">
            <i v-for="(b, i) in bars" :key="i" :style="{ height: b / 10 + 'rem' }"></i>
          </div>
        </div>
      </article>
    </section>

    <main class="map">
      <svg class="canvas" viewBox="160 1348 7316 2840" preserveAspectRatio="none">
        <rect x="160" y="1348" width="7316" height="2840" fill="#f5f5f5" />
        <g v-for="(s, i) in tiles" :key="'a' + i" :transform="s.t">
          <path v-if="s.park" :d="s.park" fill="#ededed" />
          <path v-if="s.park2" :d="s.park2" fill="#e4e4e4" />
          <path v-if="s.railw" :d="s.railw" fill="#e4e4e4" />
          <path v-if="s.water" :d="s.water" fill="#c9c9c9" />
          <path v-if="s.hill" :d="s.hill" fill="#f0f0f0" />
          <path v-if="s.rail" :d="s.rail" class="rail" />
        </g>
        <g v-for="(s, i) in tiles" :key="'b' + i" :transform="s.t" class="roads">
          <path v-if="s.minor" :d="s.minor" class="minor" />
          <path v-if="s.thin" :d="s.thin" class="thin" />
          <path v-if="s.mid" :d="s.mid" class="mid" />
          <path v-if="s.mid2" :d="s.mid2" class="mid" />
          <path v-if="s.major" :d="s.major" class="major" />
        </g>
        <path class="seam" d="M433 1348V4188M1652 1348V4188M2871 1348V4188M4090 1348V4188M5309 1348V4188M6529 1348V4188M160 1752H7476M160 2972H7476M5255 1896L6860 1900" />
        <rect x="5046" y="1755" width="88" height="85" fill="#e2e2e2" />
        <g class="place">
          <text v-for="(l, i) in labels" :key="i" :x="l[1]" :y="l[3]" :font-size="l[4]" :textLength="l[2] - l[1]">{{ l[0] }}</text>
        </g>
        <g class="place kn">
          <text v-for="(l, i) in local" :key="i" :x="l[1]" :y="l[3]" :font-size="l[4]" :textLength="l[2] - l[1]" lengthAdjust="spacingAndGlyphs">{{ l[0] }}</text>
        </g>
        <g v-for="(p, i) in pins" :key="'p' + i" class="pin" :class="p.s" :transform="`translate(${p.x} ${p.y}) scale(9.4)`">
          <path d="M0-20C-3.87-20-7-16.87-7-13c0 5.25 7 13 7 13s7-7.75 7-13c0-3.87-3.13-7-7-7zm0 9.5a2.5 2.5 0 010-5 2.5 2.5 0 010 5z" />
        </g>
      </svg>

      <aside class="panel">
        <div class="panel-head">
          <span class="ph-title">Stations</span>
          <span class="ph-city">Bengaluru</span>
          <svg class="caret" viewBox="0 0 18 9"><path d="M0 0H18L9 9z" /></svg>
          <svg class="plus" viewBox="0 0 21 21"><path d="M9 0h3v9h9v3h-9v9H9v-9H0V9h9z" /></svg>
        </div>
        <div class="stats">
          <div class="stat s1"><span>Active</span><b>6</b></div>
          <div class="stat s2"><span>Closed</span><b>0</b></div>
          <div class="stat s3"><span>Today's revenue</span><b>₹980</b></div>
        </div>
        <div class="list">
          <div class="names">
            <div v-for="s in stations" :key="s.name">{{ s.name }}</div>
          </div>
          <div class="icons">
            <div v-for="s in stations" :key="s.name" class="irow">
              <svg class="battery" :class="s.battery" viewBox="0 64 512 384">
                <path fill-rule="evenodd" d="M480 128h-32V80c0-8.84-7.16-16-16-16h-96c-8.84 0-16 7.16-16 16v48H192V80c0-8.84-7.16-16-16-16H80c-8.84 0-16 7.16-16 16v48H32c-17.67 0-32 14.33-32 32v256c0 17.67 14.33 32 32 32h448c17.67 0 32-14.33 32-32V160c0-17.67-14.33-32-32-32zM192 264c0 4.42-3.58 8-8 8H72c-4.42 0-8-3.58-8-8v-16c0-4.42 3.58-8 8-8h112c4.42 0 8 3.58 8 8v16zm256 0c0 4.42-3.58 8-8 8h-40v40c0 4.42-3.58 8-8 8h-16c-4.42 0-8-3.58-8-8v-40h-40c-4.42 0-8-3.58-8-8v-16c0-4.42 3.58-8 8-8h40v-40c0-4.42 3.58-8 8-8h16c4.42 0 8 3.58 8 8v40h40c4.42 0 8 3.58 8 8v16z" />
              </svg>
              <svg class="plug" :class="s.plug" viewBox="0 0 384 512">
                <path d="M320 32a32 32 0 0 0-64 0v112h64zm48 128H16A16 16 0 0 0 0 176v32a16 16 0 0 0 16 16h16v32a160.07 160.07 0 0 0 128 156.8V512h64v-99.2A160.07 160.07 0 0 0 352 256v-32h16a16 16 0 0 0 16-16v-32a16 16 0 0 0-16-16zM128 32a32 32 0 0 0-64 0v112h64z" />
              </svg>
              <svg class="park" :class="s.park" viewBox="0 32 448 448">
                <path fill-rule="evenodd" d="M400 32H48C21.5 32 0 53.5 0 80v352c0 26.5 21.5 48 48 48h352c26.5 0 48-21.5 48-48V80c0-26.5-21.5-48-48-48zM240 320h-48v48c0 8.8-7.2 16-16 16h-32c-8.8 0-16-7.2-16-16V144c0-8.8 7.2-16 16-16h96c52.9 0 96 43.1 96 96s-43.1 96-96 96zm0-128h-48v64h48c17.6 0 32-14.4 32-32s-14.4-32-32-32z" />
              </svg>
            </div>
          </div>
        </div>
      </aside>

      <button class="fab">
        <svg viewBox="-20 -20 40 40">
          <circle r="4.7" />
          <path d="M-5.5-10.4C-13.6-5.5-13.6 5.5-5.5 10.4C-9.2 5-9.2-5-5.5-10.4ZM5.5-10.4C13.6-5.5 13.6 5.5 5.5 10.4C9.2 5 9.2-5 5.5-10.4ZM-10.2-15.7C-21.8-8.5-21.8 8.5-10.2 15.7C-17.1 8-17.1-8-10.2-15.7ZM10.2-15.7C21.8-8.5 21.8 8.5 10.2 15.7C17.1 8 17.1-8 10.2-15.7Z" />
        </svg>
        <span class="count lime">4</span>
      </button>
    </main>
  </div>
</template>

<style>
html { font-size: calc(100vw / 192); }
body { margin: 0; background: #f7f7f7; overflow: hidden; }
</style>

<style scoped>
.page {
  width: 192rem; height: 108rem; overflow: hidden; background: #f7f7f7;
  font-family: "Noto Sans CJK JP", "Noto Sans", sans-serif; color: #000;
}
.topbar {
  position: relative; height: 8rem; box-sizing: border-box; background: #fff;
  display: flex; justify-content: space-between; align-items: flex-start;
  padding: 0 3.2rem 0 2.39rem; box-shadow: 0 1.2rem 1.7rem rgba(0, 0, 0, .11);
}
.brand { display: flex; align-items: flex-start; }
.cloud { width: 5.45rem; height: 3.01rem; margin-top: 2.69rem; }
.brand-name {
  font: 700 4.2rem/8rem "Liberation Sans", Arial, sans-serif; color: #4d2c70;
  letter-spacing: .67rem; margin: .25rem 0 0 1.8rem;
}
.actions { display: flex; align-items: flex-start; }
.moon { width: 4.57rem; height: 4.57rem; margin: 1.75rem 6.33rem 0 0; }
.moon path { fill: none; stroke: #4d2c70; stroke-width: 32; stroke-linejoin: round; }
.bell-wrap { position: relative; width: 3.46rem; margin: 2.1rem 6.44rem 0 0; }
.bell { display: block; width: 3.46rem; height: 4.5rem; }
.bell path { fill: none; stroke: #4d2c70; stroke-width: 2.8; stroke-linejoin: round; stroke-linecap: round; }
.count {
  position: absolute; left: 1.7rem; top: -1.1rem; width: 2.3rem; height: 2.3rem; border-radius: 50%;
  background: #104de0; color: #fff; font-weight: 700; font-size: 1.6rem; line-height: 2.3rem; text-align: center;
}
.avatar {
  width: 6.8rem; height: 6.8rem; margin-top: 1rem; border-radius: 50%; background: #d5d5ea; color: #4d2c70;
  font: 700 4.2rem/6.7rem "Liberation Sans", Arial, sans-serif; text-align: center; text-indent: .15rem;
}
.cards { display: flex; gap: 5.6rem; padding: 3.8rem 0 0 4rem; }
.card {
  width: 32.1rem; height: 16.3rem; border-radius: 1rem; background: #fff;
  box-shadow: 0 2.5rem 3rem rgba(0, 0, 0, .115); display: flex; flex-direction: column;
}
.card h2 {
  margin: 0; height: 5.75rem; box-sizing: content-box; border-bottom: .1rem solid #efefef; padding-left: 2.8rem;
  font-size: 2rem; font-weight: 400; line-height: 5.06rem; letter-spacing: .163rem; color: #707070;
}
.card.lead h2 { height: 5.65rem; }
.body { flex: 1; display: flex; justify-content: space-between; padding: 0 3.3rem 0 2.8rem; }
.figures { display: flex; flex-direction: column; }
.value { font-size: 2.76rem; line-height: 4rem; margin-top: 1.86rem; transform: scaleX(1.06); transform-origin: 0 50%; -webkit-text-stroke: .015rem currentColor; }
.lead .value { margin-top: 1.96rem; }
.low .value { position: relative; top: .1rem; }
.delta { font-size: 1.3rem; line-height: 2rem; margin-top: .25rem; color: #06be7a; letter-spacing: .04rem; transform: scaleX(1.07); transform-origin: 0 50%; }
.spark { width: 8.32rem; height: 3.32rem; margin-top: 4.15rem; overflow: visible; }
.lead .spark { margin-top: 4.25rem; }
.spark path { fill: none; stroke: #06be7a; stroke-width: 5; stroke-linecap: round; vector-effect: non-scaling-stroke; }
.bars { display: flex; align-items: flex-end; gap: .66rem; height: 3.7rem; margin: 3.78rem .27rem 0 0; }
.bars i { width: .6rem; border-radius: .3rem; background: #ebebeb; }
.bars i:last-child { background: #06be7a; }

.map { position: relative; width: 182.9rem; height: 71rem; margin: 5.6rem 0 0 4rem; background: #f5f5f5; }
.canvas { display: block; width: 100%; height: 100%; }
.roads path { fill: none; stroke: #fff; stroke-linejoin: round; }
.roads path, .rail { vector-effect: non-scaling-stroke; }
.minor { stroke-width: 7px; }
.thin { stroke-width: 2px; }
.mid { stroke-width: 9.5px; }
.major { stroke-width: 14px; }
.rail { fill: none; stroke: #e4e4e4; stroke-width: 8px; }
.seam { fill: none; stroke: #efefef; stroke-width: 4; }
.place text {
  font-family: Roboto, sans-serif; font-weight: 700; fill: #616161;
  stroke: #f7f7f7; stroke-width: 10; stroke-linejoin: round; paint-order: stroke;
}
.place.kn text { font-family: "Noto Sans Kannada", "Noto Sans", sans-serif; }
.pin { filter: drop-shadow(0 3px 2.6px rgba(0, 0, 0, .17)); }
.ok { fill: #20c13a; }
.warn { fill: #deb13a; }
.down { fill: #da2a2a; }

.panel {
  position: absolute; left: .8rem; top: 4.7rem; width: 44.4rem; height: 62.8rem; border-radius: 1rem; background: #fff;
  box-shadow: 0 2.1rem 3.2rem rgba(0, 0, 0, .17); color: #707070;
}
.panel-head { display: flex; align-items: flex-start; padding: 1.12rem 0 0 2.9rem; font-size: 2rem; line-height: 4rem; letter-spacing: .15rem; }
.ph-title { width: 13.5rem; }
.ph-city { width: 12.3rem; }
.caret { width: 1.8rem; height: .9rem; margin-top: 1.6rem; fill: #8c8c8c; }
.plus { width: 2.1rem; height: 2.1rem; margin: .98rem 0 0 9rem; fill: #8c8c8c; }
.stats { display: flex; height: 14.6rem; box-sizing: border-box; margin: 0 .2rem 0 .7rem; border-bottom: .1rem solid #efefef; }
.stat { display: flex; flex-direction: column; white-space: nowrap; }
.stat span { font-size: 2rem; line-height: 4rem; letter-spacing: .15rem; margin-top: 1.4rem; }
.stat b {
  font-weight: 400; font-size: 5.6rem; line-height: 6rem; letter-spacing: .4rem; margin-top: .76rem;
  transform: scaleX(1.05); transform-origin: 0 50%; -webkit-text-stroke: .04rem currentColor;
}
.s1 { width: 11rem; padding-left: 2.2rem; }
.s2 { width: 11.3rem; }
.s1 b { padding-left: 1.6rem; }
.s2 b { padding-left: 1.9rem; }
.s3 b { padding-left: .9rem; }
.list { display: flex; justify-content: space-between; padding: 1.9rem 2.9rem 0 2.66rem; color: #000; }
.names { font-size: 2rem; line-height: 5.95rem; letter-spacing: .095rem; -webkit-text-stroke: .01rem currentColor; }
.names div { height: 5.95rem; }
.icons { display: flex; flex-direction: column; margin-top: .1rem; }
.irow { height: 6rem; display: flex; align-items: center; }
.battery { width: 3.2rem; height: 2.4rem; }
.plug { width: 2.4rem; height: 3.2rem; margin: 0 2.6rem 0 2.5rem; }
.park { width: 2.8rem; height: 2.8rem; }
.fab {
  position: absolute; right: 0; top: 65rem; width: 7.5rem; height: 7.5rem; padding: 0; border: 0; border-radius: 50%;
  background: #4d2c70; display: flex; align-items: center; justify-content: center;
  box-shadow: 0 .4rem .8rem rgba(0, 0, 0, .18); font-family: inherit;
}
.fab svg { width: 4rem; height: 4rem; fill: #fff; }
.count.lime { left: auto; right: 0; top: -.2rem; background: #d4ff00; color: #4d2c70; }
</style>
